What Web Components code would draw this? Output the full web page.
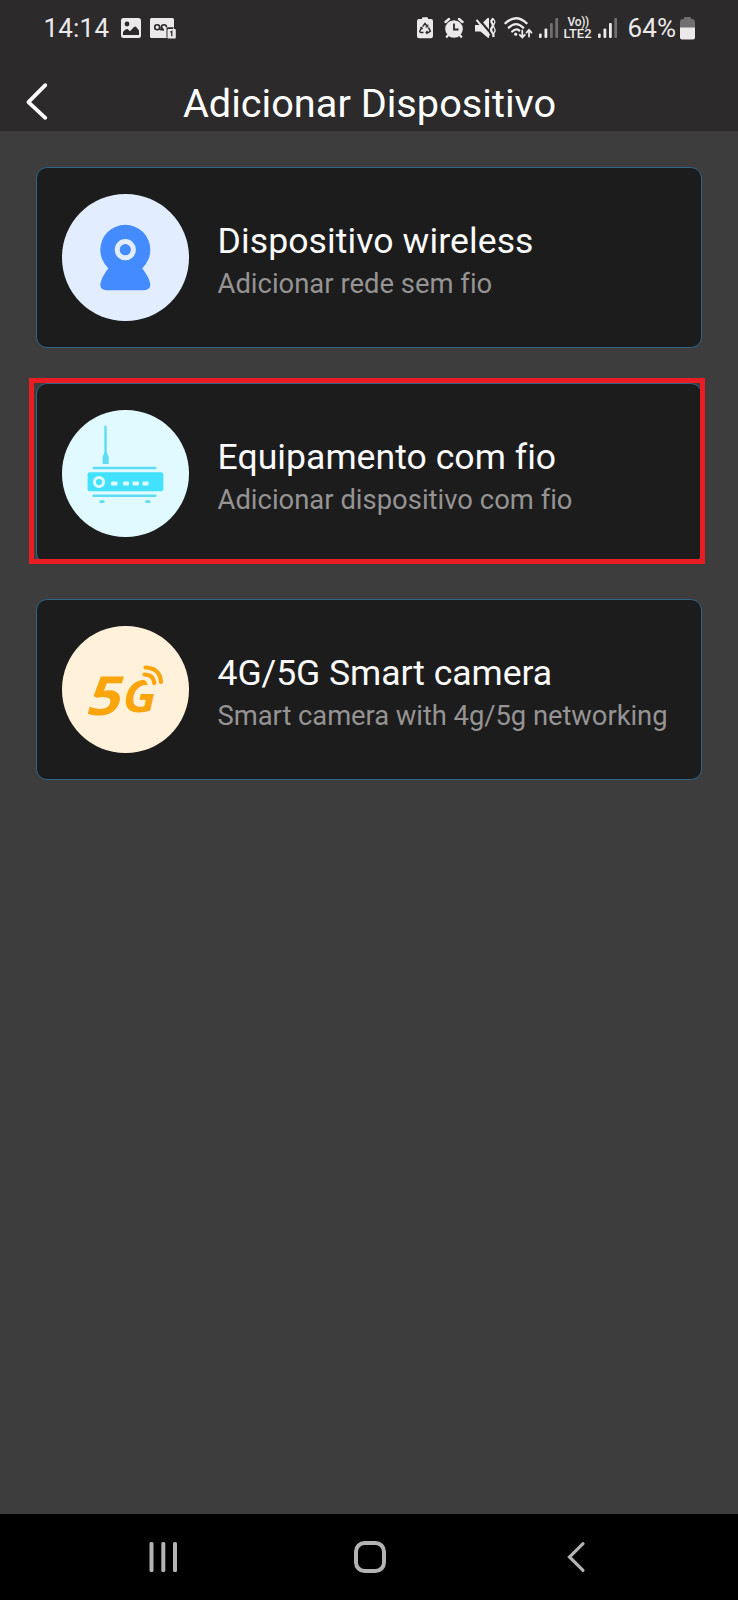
<!DOCTYPE html>
<html lang="pt">
<head>
<meta charset="utf-8">
<title>Adicionar Dispositivo</title>
<style>
html,body{margin:0;background:#3d3d3d}
body{font-family:Roboto,"Liberation Sans",sans-serif;width:738px;height:1600px;overflow:hidden}
</style>
</head>
<body>
<app-screen>
  <status-bar slot="top"></status-bar>
  <title-bar slot="top">Adicionar Dispositivo</title-bar>
  <device-card tint="#e2eeff" style="--title-ls:.09px">
    <icon-camera slot="icon"></icon-camera>
    <span slot="title">Dispositivo wireless</span>
    <span slot="sub">Adicionar rede sem fio</span>
  </device-card>
  <device-card tint="#e1faff" marked style="--title-ls:.03px">
    <icon-router slot="icon"></icon-router>
    <span slot="title">Equipamento com fio</span>
    <span slot="sub">Adicionar dispositivo com fio</span>
  </device-card>
  <device-card tint="#fff1da" style="--title-ls:-.07px;--sub-ls:-.06px">
    <icon-5g slot="icon"></icon-5g>
    <span slot="title">4G/5G Smart camera</span>
    <span slot="sub">Smart camera with 4g/5g networking</span>
  </device-card>
  <nav-bar slot="bottom"></nav-bar>
</app-screen>
<script>
function define(name, html, ready) {
  const t = document.createElement('template');
  t.innerHTML = html;
  customElements.define(name, class extends HTMLElement {
    constructor() {
      super();
      this.attachShadow({mode: 'open'}).append(t.content.cloneNode(true));
    }
    connectedCallback() { if (ready) ready(this); }
  });
}

define('app-screen', `<style>
:host{display:flex;flex-direction:column;width:738px;height:1600px;background:#3d3d3d}
header{height:131px;background:#2c2a2b;display:flex;flex-direction:column}
main{flex:1;display:flex;flex-direction:column;gap:35px;padding:36px 36px 0}
</style><header><slot name="top"></slot></header><main><slot></slot></main><slot name="bottom"></slot>`);

define('signal-bars', `<style>:host{display:block;width:20px;height:22px}svg{display:block}</style>
<svg width="20" height="22" fill="#ebe9ea"><rect y="16.5" width="2.7" height="4.5" rx="1"/><rect x="5.5" y="11.5" width="2.8" height="9.5" rx="1"/><rect class="c" x="11" y="6" width="2.8" height="15" rx="1"/><rect x="16.3" y="1" width="2.8" height="20" rx="1" fill="#716f70"/></svg>`,
 el => { if (el.hasAttribute('weak')) el.shadowRoot.querySelector('.c').setAttribute('fill', '#716f70'); });

define('status-bar', `<style>
:host{display:flex;height:56px;color:#ebe9ea;font-size:26px;line-height:56px;padding:0 43px 0 43.5px;box-sizing:border-box}
.g{display:flex;align-items:center;white-space:nowrap}
.r{margin-left:auto}
svg{display:block;flex:none}
.time{width:77.5px;letter-spacing:.2px}
.pct{width:52.5px;letter-spacing:.2px}
.lte{width:34px;font-size:13px;line-height:12px;font-weight:500}
.lte span{display:block;height:12px}
.lte .v{font-size:12px;padding-left:4px;letter-spacing:-.3px}
</style>
<div class="g"><span class="time">14:14</span>
<svg width="29" height="22" fill="#ebe9ea"><rect y="1" width="20" height="20" rx="2.5"/><circle cx="6" cy="7" r="2.4" fill="#2c2a2b"/><path d="M2 18V15Q4.500 11.500 6.500 12L9 14.200 13 10Q14 9 15.200 10L18 13.5V18Z" fill="#2c2a2b"/></svg>
<svg width="26" height="22" fill="none" stroke="#2c2a2b" stroke-width="1.6"><rect y="1" width="24" height="20" rx="1.5" fill="#ebe9ea" stroke="none"/><circle cx="7.200" cy="10.300" r="2.500"/><path d="M9.700 10.300V11.500Q9.700 12.800 11 12.800H14A2.500 2.500 0 1 1 16.500 10.300"/><path d="M14 12.800A2.500 2.500 0 0 1 11.800 10.300"/><path d="M16.500 22V11.500Q16.500 10.300 18 10.300H26V0H24V10" fill="#2c2a2b" stroke="none"/><rect x="17.500" y="12" width="8.300" height="9.500" rx="1" fill="#ebe9ea" stroke="none"/><path d="M20.300 15.200 21.800 14.300V19.300" stroke-width="1.300"/></svg></div>
<div class="g r">
<svg width="27" height="22" fill="#ebe9ea"><path d="M5 2V1Q5 .2 6 .2H10Q11 .2 11 1V2H14Q16 2 16 4V19Q16 21.3 14 21.3H2Q0 21.3 0 19V4Q0 2 2 2Z"/><g fill="none" stroke="#2c2a2b" stroke-width="1.5"><path d="M5.7 9.6 8 6.5 10.4 9.6M11.5 10.7 13.3 14 11.5 15.6H9M6.5 15.6H4Q2 15.3 3.2 13.3L4.5 11"/><path d="M10.8 7.5V10H8.5M10.5 14 9 15.6 10.5 17.2M3 11 4.7 10.5 5.5 12.3" stroke-width="1.1"/></g></svg>
<svg width="31" height="22" fill="none" stroke="#ebe9ea"><circle cx="10" cy="12" r="8.8" fill="#ebe9ea" stroke="none"/><path d="M1.500 5 5 2M15 2 18.500 5" stroke-width="2.4" stroke-linecap="round"/><path d="M4.2 18 2.2 20.5M15.8 18 17.8 20.5" stroke-width="2.2"/><path d="M10 6.5V12.5H14.5" stroke="#2c2a2b" stroke-width="1.8"/></svg>
<svg width="29" height="22" fill="none" stroke="#ebe9ea" stroke-width="2"><path d="M0 8H5.500L12 1.500Q14 0 14 2V20Q14 22 12 20L5.500 14.500H0Z" fill="#ebe9ea" stroke="none"/><path d="M3.200 1.500 15.500 16" stroke="#2c2a2b" stroke-width="2.200"/><path d="M1.500 2.800 14.500 18.500" stroke-width="2"/><path d="M18.500 1.500Q15 4 17 6T17 10.500 17 15 18.500 20" stroke-width="2.200"/><path d="M18 2Q21 4.500 19.300 6.500T19.300 11 19.300 15.500 18 20" stroke-width="1.200"/></svg>
<svg width="35" height="22" fill="none" stroke="#ebe9ea" stroke-width="2.3" stroke-linecap="round"><path d="M1.500 6.200Q12-3.600 22.500 6.200M4.800 10.600Q12 3.600 19.200 10.600M8.200 14.500Q12 10.800 15.200 13.500"/><circle cx="11.7" cy="17.200" r="1.600" fill="#ebe9ea" stroke="none"/><path d="M18.300 13.500V20M15.800 17.800 18.300 20.500 20.800 17.800M25 19.500V13.500M22.500 15.600 25 12.800 27.500 15.600" stroke-width="1.800"/></svg>
<signal-bars weak style="width:25px"></signal-bars>
<div class="lte"><span class="v">Vo))</span><span class="l">LTE2</span></div>
<signal-bars style="width:30px"></signal-bars>
<span class="pct">64%</span>
<svg width="15" height="23"><path d="M4 2V1Q4 0 5 0H10Q11 0 11 1V2H13Q15 2.5 15 5V11H0V5Q0 2.5 2 2Z" fill="#716f70"/><path d="M0 10.5H15V20.5Q15 22.5 13 22.5H2Q0 22.5 0 20.5Z" fill="#ebe9ea"/></svg>
</div>`);

define('title-bar', `<style>
:host{display:grid;grid-template-columns:80px 1fr 80px;height:75px;color:#fff;font-size:39.7px;line-height:46px}
svg{margin:25px 0 0 24px;display:block}
h1{margin:25px 0 0 1px;font:inherit;text-align:center;white-space:nowrap}
</style><svg width="28" height="42" fill="none" stroke="#fff" stroke-width="3.8" stroke-linecap="round" stroke-linejoin="round"><path d="M21.3 4.2 4.4 21.1 21.3 36.8"/></svg><h1><slot></slot></h1>`);

define('device-card', `<style>
:host{position:relative;display:flex;align-items:center;box-sizing:border-box;height:181px;flex:none;border:1px solid #316488;border-radius:11px;background:#1c1c1c;padding-left:25px}
.disc{width:126.500px;height:126.500px;border-radius:50%;flex:none}
.txt{margin-left:29px;display:flex;flex-direction:column;white-space:nowrap;padding-top:10px}
.t{font-size:35.6px;height:42px;line-height:40px;color:#fafafa;letter-spacing:var(--title-ls,0)}
.s{font-size:27.4px;line-height:42px;color:#959393;letter-spacing:var(--sub-ls,.02px)}
.mark{display:none}
:host([marked]) .mark{display:block;position:absolute;inset:-6px -4px -1px -8px;border:5px solid #ea1c24}
</style><div class="disc"><slot name="icon"></slot></div><div class="txt"><div class="t"><slot name="title"></slot></div><div class="s"><slot name="sub"></slot></div></div><div class="mark"></div>`,
 el => { el.shadowRoot.querySelector('.disc').style.background = el.getAttribute('tint'); });

const box = '<style>:host{display:block;width:127px;height:127px}svg{display:block}</style>';
define('icon-camera', box + `<svg width="127" height="127" fill="#438bfe"><circle cx="63.3" cy="55.8" r="25"/><path d="M46.5 74Q39.5 83 38.3 90Q38 96 44.5 96.3H82Q88.500 96 88.300 90Q87 83 80 74Q63 62 46.500 74Z"/><circle cx="63.3" cy="55.700" r="8.100" fill="none" stroke="#e2eeff" stroke-width="5"/></svg>`);
define('icon-router', box + `<svg width="127" height="127" fill="#5edcf1"><path d="M42.300 16.500Q43.500 14.500 44.700 16.500V42L46.700 47V54H40.600V47L42.300 42Z"/><rect x="30.500" y="56.700" width="64" height="2.500" rx="1"/><rect x="25.600" y="62.300" width="75.700" height="19" rx="2" fill="#42e1fe"/><rect x="30.500" y="84.500" width="64" height="2.500" rx="1"/><rect x="37.500" y="90.300" width="5" height="2.600" rx="1"/><rect x="83.300" y="90.300" width="5" height="2.600" rx="1"/><circle cx="37" cy="72" r="4.600" fill="none" stroke="#e1faff" stroke-width="3"/><g fill="#e1faff"><rect x="49" y="71.500" width="6.500" height="4" rx="1"/><rect x="61" y="71.500" width="6" height="4" rx="1"/><rect x="70.500" y="71.500" width="6.500" height="4" rx="1"/><rect x="80.500" y="71.500" width="6" height="4" rx="1"/></g></svg>`);
define('icon-5g', box + `<svg width="127" height="127" fill="#faa50b" font-family="Open Sans" font-weight="700"><text transform="translate(22.500 88.500) skewX(-16) scale(1.100 1)" font-size="54">5</text><text transform="translate(58.500 85.500) skewX(-12) scale(1.020 1)" font-size="45">G</text><g fill="none" stroke="#fff1da" stroke-width="6"><path d="M80 50.500Q88 50.500 89 61"/></g><g fill="none" stroke="#faa50b" stroke-width="4.200" stroke-linecap="round"><path d="M83.500 41.500Q98 42 99 56M82.500 48.500Q91.500 48.500 92.300 57"/></g></svg>`);

define('nav-bar', `<style>
:host{display:grid;grid-template-columns:1fr 1fr 1fr;width:658px;padding:0 39px 0 41px;height:86px;background:#000;align-items:center;justify-items:center}
svg{display:block;margin-top:-1px}
svg:first-of-type{margin-left:28px}
svg:last-of-type{margin-right:26px}
</style>
<svg width="36" height="36" fill="#b3b3b3"><rect x="2.500" y="3" width="4" height="30" rx="1.500"/><rect x="14.300" y="3" width="4" height="30" rx="1.500"/><rect x="26" y="3" width="4" height="30" rx="1.500"/></svg>
<svg width="36" height="36" fill="none" stroke="#b3b3b3" stroke-width="4"><rect x="4" y="4" width="28" height="28" rx="8.500"/></svg>
<svg width="36" height="36" fill="none" stroke="#b3b3b3" stroke-width="3.200" stroke-linecap="round"><path d="M25 4.700 11.500 18 25 31.300"/></svg>`);
</script>
</body>
</html>
